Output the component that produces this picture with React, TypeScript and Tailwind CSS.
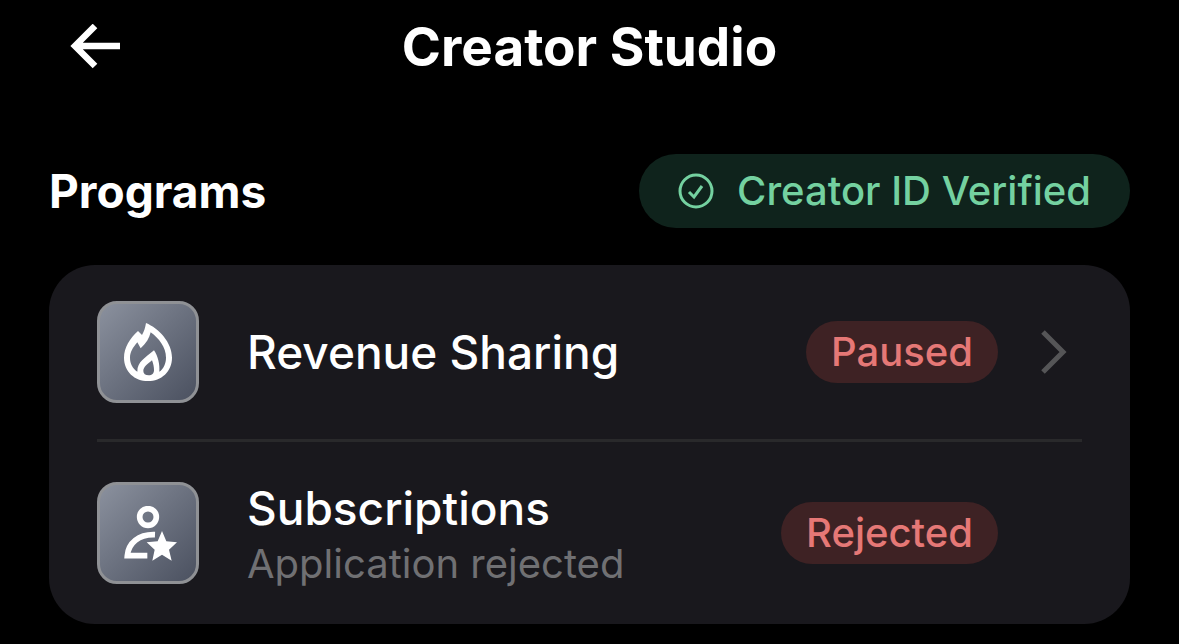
import type { ReactNode } from "react";

function FlameIcon() {
  return (
    <svg viewBox="0 0 144 174" className="h-[58px] w-12" fill="currentColor" fillRule="evenodd" aria-hidden="true">
      <path d="M66 0C104 16 144 58 144 104C144 146 112 174 72 174C32 174 0 146 0 104C0 74 18 46 42 24L54 36C60 26 64 14 66 0ZM40 58C26 74 18 88 18 104C18 122 26 136 40 146C40 116 62 106 90 82C102 100 108 124 106 146C118 138 126 122 126 104C126 72 104 46 80 28C76 46 66 62 50 76ZM84 112C70 124 58 132 58 144C58 152 64 157 74 157C84 157 90 151 90 142C90 132 88 122 84 112Z" />
    </svg>
  );
}

function SubscriberIcon() {
  return (
    <svg viewBox="0 0 159 165" className="ml-1 h-[55px] w-[53px]" fill="none" aria-hidden="true">
      <circle cx="72" cy="33" r="25" stroke="currentColor" strokeWidth="17" />
      <path d="M70 149H10C13 112 44 84 93 86" stroke="currentColor" strokeWidth="17" />
      <path d="M114 75L127 106L159 109L135 131L143 164L114 146L85 164L92 131L68 109L101 106Z" fill="currentColor" />
    </svg>
  );
}

function ProgramIcon({ children }: { children: ReactNode }) {
  return (
    <div className="flex size-[102px] shrink-0 items-center justify-center rounded-[20px] border-3 border-[#8f9195] bg-linear-to-br from-[#8b919e] to-[#4b5160] text-white">
      {children}
    </div>
  );
}

function StatusBadge({ label }: { label: string }) {
  return (
    <span className="flex h-[62px] items-center rounded-full bg-[#3e2224] px-[25px] text-[40px] font-medium text-[#e57876]">
      {label}
    </span>
  );
}

export default function App() {
  return (
    <div className="min-h-screen bg-black pb-5 font-['Inter','Liberation_Sans',sans-serif] text-white">
      {/* Header */}
      <header className="grid grid-cols-[1fr_auto_1fr] items-center px-[70px] pt-3">
        <button type="button" aria-label="Back" className="w-fit">
          <svg viewBox="0 0 50 46" className="h-[46px] w-[50px]" fill="none" stroke="currentColor" strokeWidth="6.5" aria-hidden="true">
            <path d="M25 2L5 22L25 42M5 22H50" />
          </svg>
        </button>
        <h1 className="text-[53px] leading-[70px] font-bold">Creator Studio</h1>
      </header>

      <main className="px-[49px] pt-[72px]">
        {/* Section title */}
        <div className="flex items-center justify-between">
          <h2 className="text-[46px] leading-[68px] font-bold">Programs</h2>
          <div className="flex h-[74px] items-center gap-[22px] rounded-full bg-[#0f231c] px-[39px] text-[40px] font-medium text-[#74d1a0]">
            <svg viewBox="0 0 37 37" className="size-[37px]" fill="none" stroke="currentColor" strokeWidth="3" aria-hidden="true">
              <circle cx="18" cy="18" r="16" />
              <path d="M11 19L16 24L24 13" />
            </svg>
            Creator ID Verified
          </div>
        </div>

        {/* Programs */}
        <ul className="mt-[37px] rounded-[46px] bg-[#19181d] px-12">
          <li className="border-b-3 border-[#29292b]">
            <a href="#revenue-sharing" className="flex items-center py-9">
              <ProgramIcon>
                <FlameIcon />
              </ProgramIcon>
              <span className="ml-12 flex-1 text-[46px] leading-14 font-medium">Revenue Sharing</span>
              <StatusBadge label="Paused" />
              <span className="flex w-21 justify-center pl-7">
                <svg viewBox="0 0 26 44" className="h-11 w-[26px]" fill="none" stroke="#555557" strokeWidth="5" aria-hidden="true">
                  <path d="M2 2L22 22L2 42" />
                </svg>
              </span>
            </a>
          </li>
          <li className="flex items-center py-8">
            <ProgramIcon>
              <SubscriberIcon />
            </ProgramIcon>
            <div className="ml-12 flex-1 pt-1.5">
              <p className="text-[46px] leading-14 font-medium">Subscriptions</p>
              <p className="text-[40px] leading-14 text-[#707073]">Application rejected</p>
            </div>
            <div className="mr-21">
              <StatusBadge label="Rejected" />
            </div>
          </li>
        </ul>
      </main>
    </div>
  );
}
